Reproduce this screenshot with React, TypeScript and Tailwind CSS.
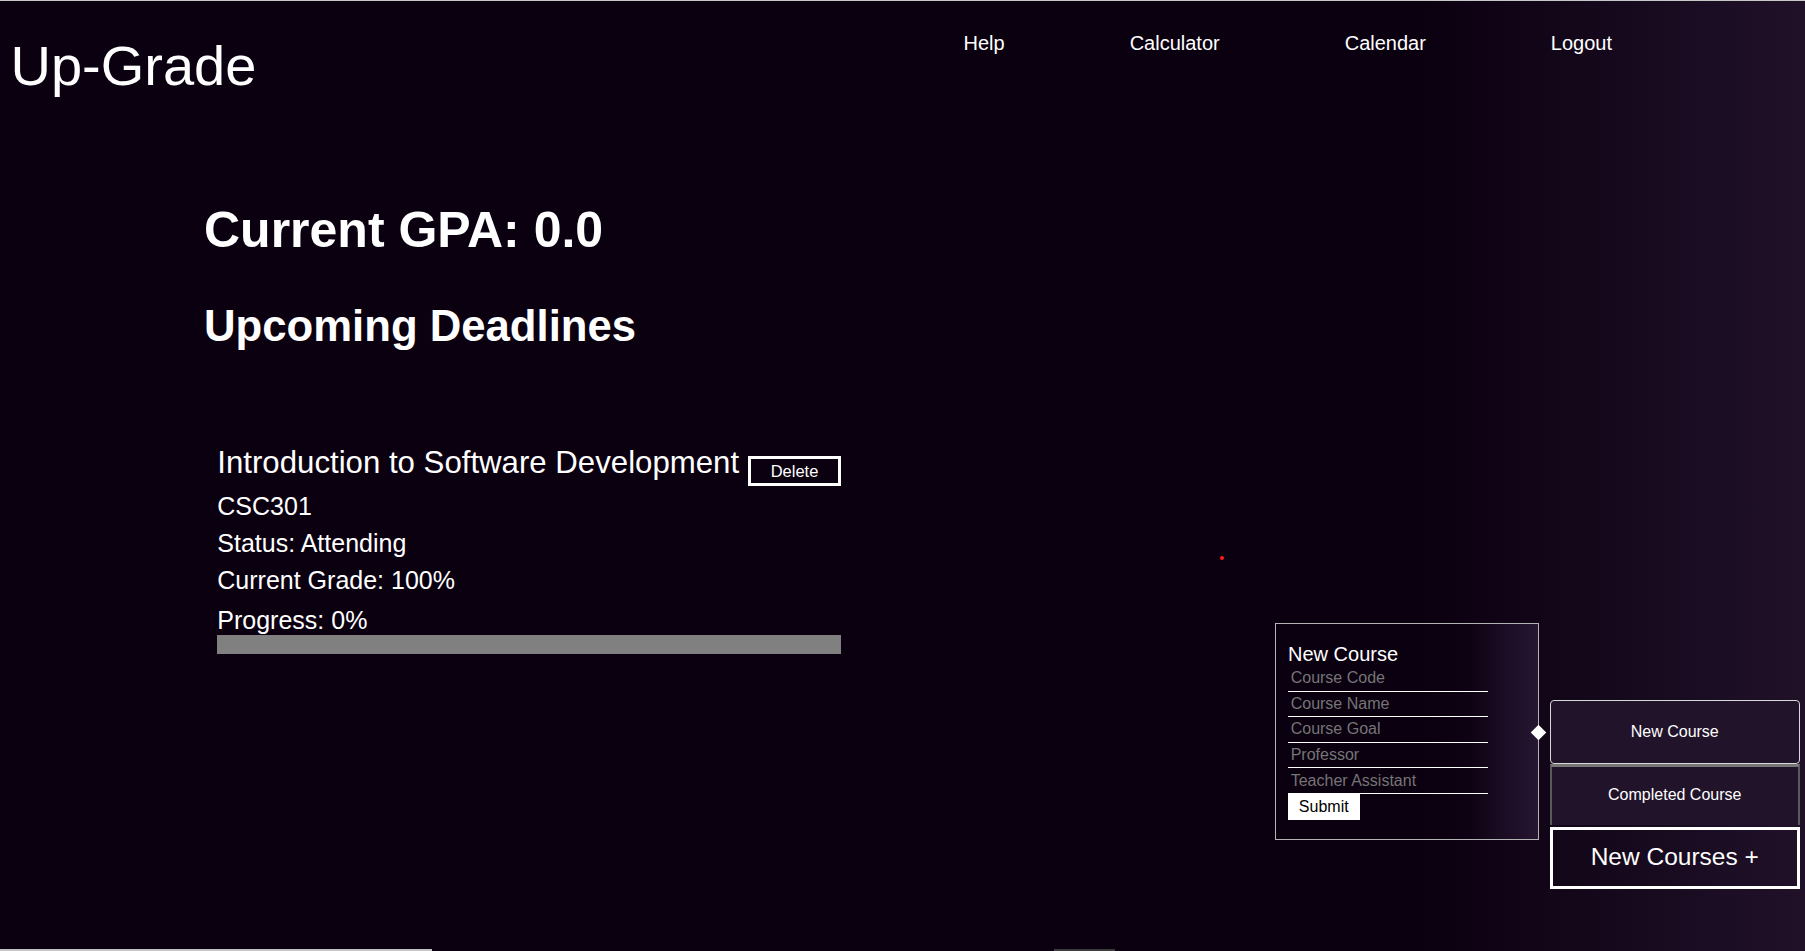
import React from "react";

const inputs = ["Course Code", "Course Name", "Course Goal", "Professor", "Teacher Assistant"];

export default function App() {
  return (
    <div className="relative h-[951px] w-full overflow-hidden border-t border-[#c8c8c8] bg-[linear-gradient(to_right,#0b0010_0%,#0b0010_79%,#201129_100%)] font-['Liberation_Sans',Arial,sans-serif] text-white">
      <header className="flex h-[100px] items-start">
        <div className="w-[963.5px] shrink-0 pl-[10.5px]">
          <h1 className="mt-[36.6px] text-[56px] font-normal leading-none">Up-Grade</h1>
        </div>
        <nav className="mt-[31.7px] flex gap-[125px] text-[20px] leading-none">
          <a>Help</a>
          <a>Calculator</a>
          <a>Calendar</a>
          <a>Logout</a>
        </nav>
      </header>

      <div className="flex items-start">
        <div className="ml-[204px] flex flex-col">
          <h2 className="mt-[104px] text-[50px] font-bold leading-none">Current GPA: 0.0</h2>
          <h2 className="mt-[48.5px] text-[43.7px] font-bold leading-none">Upcoming Deadlines</h2>

          <div className="ml-[13.3px] mt-[100px] flex flex-col">
            <div className="flex items-start">
              <span className="text-[31.2px] leading-none">Introduction to Software Development</span>
              <button className="ml-[8.7px] mt-[9.2px] flex h-[30px] w-[93.5px] items-center justify-center border-[3px] border-white text-[16.5px] leading-none text-white">
                Delete
              </button>
            </div>
            <div className="mt-[7.8px] text-[25px] leading-none">CSC301</div>
            <div className="mt-[11.7px] text-[25px] leading-none">Status: Attending</div>
            <div className="mt-[11.7px] text-[25px] leading-none">Current Grade: 100%</div>
            <div className="mt-[15px] text-[25px] leading-none">Progress: 0%</div>
            <div className="mt-[2.5px] h-[19px] w-[624px] bg-[#808080]" />
          </div>
        </div>

        <div className="ml-auto mr-[5px] mt-[522px] flex items-start gap-[10.5px]">
          <div className="relative box-border h-[217px] w-[264px] border border-[#b4b4b4] bg-[linear-gradient(to_right,transparent_0%,transparent_74%,#261632_100%)] pl-[12px] pt-[20px]">
            <div className="text-[20px] leading-none">New Course</div>
            <div className="mt-[2px] flex w-[200px] flex-col">
              {inputs.map((p) => (
                <div
                  key={p}
                  className="box-border flex h-[25.6px] items-center border-b border-white pl-[2.7px] text-[16px] leading-none text-[#757575]"
                >
                  {p}
                </div>
              ))}
            </div>
            <button className="flex h-[26px] w-[71.5px] items-center justify-center bg-white text-[16px] leading-none text-black">
              Submit
            </button>
            <div className="absolute left-[256.5px] top-[102.5px] h-[11px] w-[11px] rotate-45 bg-white" />
          </div>

          <div className="mt-[77px] flex w-[250.5px] flex-col">
            <button className="box-border flex h-[64px] items-center justify-center rounded-[4px] border border-[#d8d8d8] bg-[#21132a] text-[16px] leading-none text-white">
              New Course
            </button>
            <button className="box-border flex h-[61px] items-center justify-center border-x-2 border-t-[3px] border-x-[#5a5a5a] border-t-[#777777] bg-[#21132a] pb-[2px] text-[16px] leading-none text-white">
              Completed Course
            </button>
            <button className="mt-[1.5px] box-border flex h-[62px] items-center justify-center border-[3px] border-white bg-transparent text-[24.5px] leading-none text-white">
              New Courses +
            </button>
          </div>
        </div>
      </div>

      <div className="absolute left-[1220px] top-[555px] h-[4px] w-[4px] rounded-full bg-[#ff1a1a]" />

      <div className="absolute bottom-0 left-0 flex h-[2px] w-full">
        <div className="h-full w-[432px] bg-[#c4c4c4]" />
        <div className="ml-[622px] h-full w-[61px] bg-[#3c3c3c]" />
      </div>
    </div>
  );
}
